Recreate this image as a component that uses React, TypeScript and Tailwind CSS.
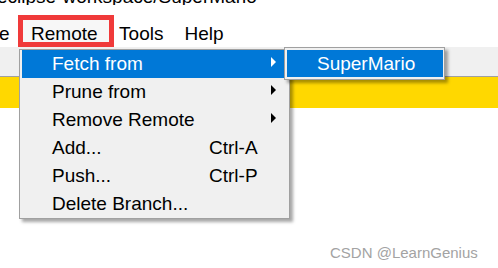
import React from 'react';

interface MenuItem {
  label: string;
  shortcut?: string;
  hasSubmenu?: boolean;
  active?: boolean;
}

const items: MenuItem[] = [
  { label: 'Fetch from', hasSubmenu: true, active: true },
  { label: 'Prune from', hasSubmenu: true },
  { label: 'Remove Remote', hasSubmenu: true },
  { label: 'Add...', shortcut: 'Ctrl-A' },
  { label: 'Push...', shortcut: 'Ctrl-P' },
  { label: 'Delete Branch...' },
];

const Arrow = ({ white }: { white?: boolean }) => (
  <svg width="5" height="10" viewBox="0 0 5 10" className="ml-auto mr-[11px] mb-[4px]">
    <path d="M0 0 L5 5 L0 10 Z" fill={white ? '#ffffff' : '#000000'} />
  </svg>
);

const App: React.FC = () => {
  return (
    <div
      className="relative w-[498px] h-[268px] overflow-hidden bg-white text-black"
      style={{ fontFamily: '"Liberation Sans", Arial, sans-serif' }}
    >
      {/* window title, cut off at top */}
      <div className="h-[5px] overflow-hidden">
        <div className="-mt-[14px] -ml-[3px] text-[19px] leading-[22px] whitespace-nowrap">
          eclipse-workspace/SuperMario
        </div>
      </div>

      {/* menu bar */}
      <div className="flex items-start h-[42px] text-[19px] leading-[22px]">
        <span className="mt-[18px] -ml-[1px]">e</span>
        <div className="mt-[10px] ml-[8.5px] w-[96px] h-[32px] border-[5px] border-[#f03a3a] bg-[#f7f7f7] pl-[8px] pt-[3px]">
          Remote
        </div>
        <span className="mt-[18px] ml-[5px]">Tools</span>
        <span className="mt-[18px] ml-[21px]">Help</span>
      </div>

      {/* toolbar strip + yellow band */}
      <div className="h-[30px] bg-[#f0f0f0] border-b border-[#a0a0a0]" />
      <div className="h-[31px] bg-[#ffd800]" />

      {/* dropdown menu */}
      <div className="absolute left-[19px] top-[49px] w-[271px] border border-[#a0a0a0] bg-[#f0f0f0] shadow-[3px_3px_3px_rgba(0,0,0,0.35)]">
        <div className="px-[2px]">
          {items.map((item) => (
            <div
              key={item.label}
              className={`flex items-center h-[28px] text-[19px] leading-[28px] ${
                item.active ? 'bg-[#0078d7] text-white' : ''
              }`}
            >
              <span className="pl-[30px] w-[187px] whitespace-nowrap">{item.label}</span>
              {item.shortcut && <span className="whitespace-nowrap">{item.shortcut}</span>}
              {item.hasSubmenu && <Arrow white={item.active} />}
            </div>
          ))}
        </div>
      </div>

      {/* submenu */}
      <div className="absolute left-[284px] top-[47px] w-[161px] border border-[#a0a0a0] bg-[#f0f0f0] pt-[2px] pb-[2px] pl-[2px] pr-[1px] shadow-[3px_3px_3px_rgba(0,0,0,0.35)]">
        <div className="h-[27px] bg-[#0078d7] text-white text-[19px] leading-[27px] pl-[30px] whitespace-nowrap">
          SuperMario
        </div>
      </div>

      {/* watermark */}
      <div className="absolute left-[330px] top-[244px] text-[15px] leading-[18px] text-[#a3a3a3] whitespace-nowrap">
        CSDN @LearnGenius
      </div>
    </div>
  );
};

export default App;
